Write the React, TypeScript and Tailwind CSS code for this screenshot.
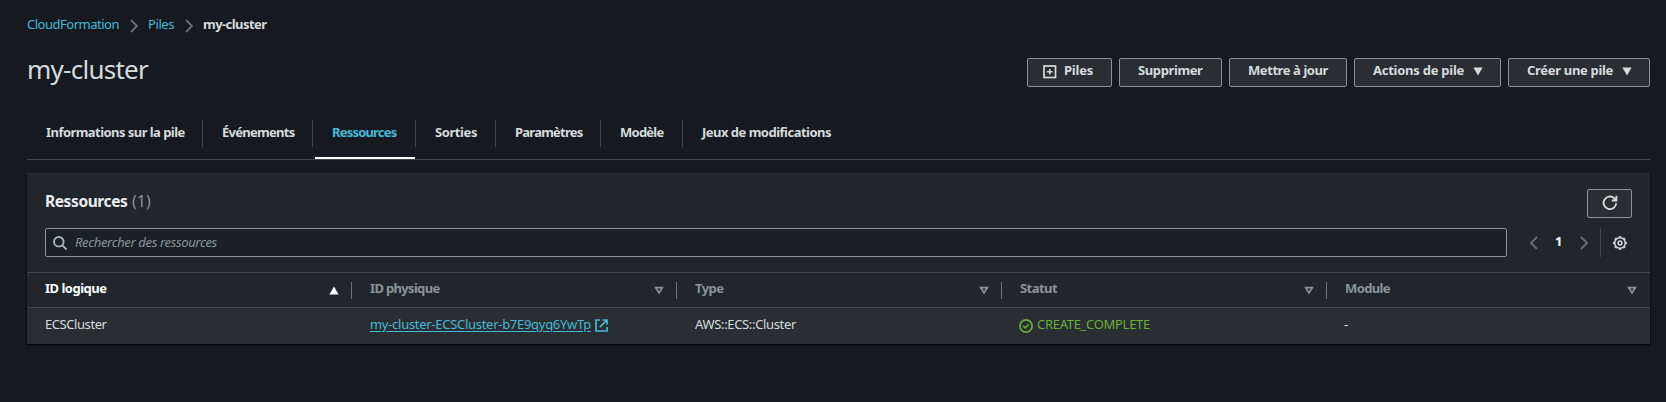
import type { ReactNode } from "react";

function Crumb() {
  return (
    <svg className="mt-[5px] h-[14px] w-2 shrink-0" viewBox="0 0 8 14" fill="none" stroke="#687078" strokeWidth="1.8">
      <path d="M1 1l6 6-6 6" />
    </svg>
  );
}

function StackIcon() {
  return (
    <svg className="mt-[3px] size-[14px] shrink-0" viewBox="0 0 14 14" fill="none" stroke="#d5dbdb">
      <rect x="1" y="1" width="11.5" height="11.5" strokeWidth="1.7" />
      <path d="M6.75 4v5.5M4 6.75h5.5" strokeWidth="1.5" />
    </svg>
  );
}

function Caret() {
  return (
    <svg className="mt-[3px] h-[9px] w-[10px] shrink-0" viewBox="0 0 10 9" fill="#d5dbdb">
      <path d="M.4.5h9.2L5 8.5z" />
    </svg>
  );
}

function Button({ width, children }: { width: string; children: ReactNode }) {
  return (
    <button className={`flex h-[29px] ${width} items-center rounded-[2px] border border-[#879596] bg-[#2a2e33] pb-[5px] pl-[18px] text-left text-[13px] leading-[22px] font-bold whitespace-nowrap text-[#d5dbdb]`}>
      {children}
    </button>
  );
}

const tabs = [
  { label: "Informations sur la pile", width: "w-[176px] pl-[19px]", tracking: "tracking-[-0.55px]" },
  { label: "Événements", width: "w-[110px] pl-[19px]", tracking: "tracking-[-0.72px]" },
  { label: "Ressources", width: "w-[103px] pl-[19px]", tracking: "tracking-[-0.8px]", active: true },
  { label: "Sorties", width: "w-[80px] pl-[19px]", tracking: "tracking-[-0.41px]" },
  { label: "Paramètres", width: "w-[105px] pl-[19px]", tracking: "tracking-[-0.76px]" },
  { label: "Modèle", width: "w-[82px] pl-[19px]", tracking: "tracking-[-0.75px]" },
  { label: "Jeux de modifications", width: "w-[170px] pl-[19px]", tracking: "tracking-[-0.51px]", last: true },
];

const columns = [
  { label: "ID logique", tracking: "tracking-[-0.5px]", sorted: true },
  { label: "ID physique", tracking: "tracking-[-0.67px]" },
  { label: "Type", tracking: "tracking-[-0.53px]" },
  { label: "Statut", tracking: "tracking-[-0.55px]" },
  { label: "Module", tracking: "tracking-[-0.62px]", last: true },
];

const grid = "grid grid-cols-[325px_325px_325px_325px_323px]";

export default function App() {
  return (
    <div className="h-[402px] w-[1666px] overflow-hidden bg-[#16191f] pt-[14px] pr-4 pl-[27px] font-['Noto_Sans','Open_Sans',sans-serif] text-[13px] leading-5 text-[#d5dbdb]">
      <nav className="flex h-5 whitespace-nowrap">
        <a className="w-[103px] tracking-[-0.49px] text-[#44b9d6]">CloudFormation</a>
        <Crumb />
        <a className="ml-[10px] w-[37px] tracking-[-0.4px] text-[#44b9d6]">Piles</a>
        <Crumb />
        <span className="ml-[10px] font-bold tracking-[-0.55px]">my-cluster</span>
      </nav>

      <header className="mt-4 flex h-[37px] items-end justify-between">
        <h1 className="text-[26px] leading-9 tracking-[-0.75px]">my-cluster</h1>
        <div className="flex gap-[7px]">
          <Button width="w-[85px]">
            <span className="-ml-[3px] flex items-center gap-[7px]">
              <StackIcon />
              <span className="tracking-[-0.22px]">Piles</span>
            </span>
          </Button>
          <Button width="w-[103px]"><span className="tracking-[-0.39px]">Supprimer</span></Button>
          <Button width="w-[118px]"><span className="tracking-[-0.42px]">Mettre à jour</span></Button>
          <Button width="w-[147px]">
            <span className="w-[100px] tracking-[-0.25px]">Actions de pile</span>
            <Caret />
          </Button>
          <Button width="w-[142px]">
            <span className="w-[95px] tracking-[-0.31px]">Créer une pile</span>
            <Caret />
          </Button>
        </div>
      </header>

      <div className="mt-[33px] flex h-10 border-b border-[#414750]">
        {tabs.map((tab) => (
          <div key={tab.label} className={`relative h-[27px] ${tab.width} ${tab.last ? "" : "border-r border-[#414750]"} leading-[25px] font-bold whitespace-nowrap ${tab.tracking} ${tab.active ? "text-[#44b9d6]" : ""}`}>
            {tab.label}
            {tab.active && <div className="absolute top-[37px] left-[2px] h-[2px] w-[100px] bg-white" />}
          </div>
        ))}
      </div>

      <main className="mt-[13px] h-[171px] w-[1623px] border-t border-[#2a2e33] bg-[#21252c] shadow-[0_1px_1px_0_rgba(0,0,0,0.6),1px_1px_1px_0_rgba(0,0,0,0.3),-1px_1px_1px_0_rgba(0,0,0,0.3)]">
        <div className="flex h-[54px] justify-between pt-[15px] pr-[18px] pl-[18px]">
          <h2 className="flex text-[15.5px] leading-6 font-bold text-[#eaeded]">
            <span className="w-[87px] tracking-[-0.4px]">Ressources</span>
            <span className="text-[16px] font-normal text-[#879596]">(1)</span>
          </h2>
          <button className="flex h-[29px] w-[45px] items-center rounded-[2px] border border-[#879596] bg-[#2a2e33] pb-px pl-[14px]">
            <svg className="size-4" viewBox="0 0 16 16" fill="none" stroke="#d5dbdb" strokeWidth="1.9">
              <path d="M14.2 8.2A6.3 6.3 0 1 1 12.2 3.2l1.8 1.6" />
              <path d="M14.4 .8v4.7H9.8" />
            </svg>
          </button>
        </div>

        <div className="flex h-[29px] items-center pl-[18px]">
          <div className="flex h-[29px] w-[1462px] items-center rounded-[2px] border border-[#879596] bg-[#1a2029] pl-[7px]">
            <svg className="mr-[8px] size-[14px]" viewBox="0 0 14 14" fill="none" stroke="#aab7b8" strokeWidth="1.9">
              <circle cx="5.8" cy="5.8" r="4.8" />
              <path d="M9.2 9.2l4.3 4.3" />
            </svg>
            <span className="mb-[2px] tracking-[-0.35px] text-[#879596] italic">Rechercher des ressources</span>
          </div>
          <svg className="ml-[23px] h-[14px] w-2" viewBox="0 0 8 14" fill="none" stroke="#687078" strokeWidth="1.8"><path d="M7 1L1 7l6 6" /></svg>
          <span className="mb-[3px] ml-[17px] w-[8px] font-bold text-white">1</span>
          <svg className="ml-[17px] h-[14px] w-2" viewBox="0 0 8 14" fill="none" stroke="#687078" strokeWidth="1.8"><path d="M1 1l6 6-6 6" /></svg>
          <div className="ml-[12px] h-[29px] w-px bg-[#414750]" />
          <svg className="ml-[12px] size-[14px]" viewBox="0 0 14 14" fill="none" stroke="#d5dbdb">
            <circle cx="7" cy="7" r="5.3" strokeWidth="1.5" />
            <circle cx="7" cy="7" r="6.3" strokeWidth="1.3" pathLength="16" strokeDasharray="1 1" strokeDashoffset="0.5" />
            <circle cx="7" cy="7" r="1.9" strokeWidth="1.5" />
          </svg>
        </div>

        <div className={`mt-[15px] h-9 border-y border-[#414750] ${grid}`}>
          {columns.map((col) => (
            <div key={col.label} className="flex h-[34px] items-center justify-between pl-[18px]">
              <span className={`mb-[5px] font-bold ${col.tracking} ${col.sorted ? "text-white" : "text-[#879596]"}`}>{col.label}</span>
              <span className="flex items-center">
                {col.sorted ? (
                  <svg className="mt-[1px] mr-[12px] h-[9px] w-[10px]" viewBox="0 0 10 9" fill="#fff"><path d="M5 .6L9.6 8.4H.4z" /></svg>
                ) : (
                  <svg className={`mt-[1px] h-[9px] w-[10px] ${col.last ? "mr-[13px]" : "mr-[12px]"}`} viewBox="0 0 10 9" fill="none" stroke="#879596" strokeWidth="1.7"><path d="M1.7 1.7h6.6L5 6.9z" /></svg>
                )}
                {!col.last && <span className="h-[17px] w-px bg-[#687078]" />}
              </span>
            </div>
          ))}
        </div>

        <div className={`h-9 bg-[#2a2e33] leading-[32px] whitespace-nowrap ${grid}`}>
          <div className="pl-[18px] tracking-[-0.43px]">ECSCluster</div>
          <div className="flex pl-[18px] text-[#44b9d6]">
            <a className="w-[225px] tracking-[-0.285px] underline underline-offset-2">my-cluster-ECSCluster-b7E9qyq6YwTp</a>
            <svg className="mt-[11px] size-[13px]" viewBox="0 0 13 13" fill="none" stroke="#44b9d6" strokeWidth="1.7">
              <path d="M5 1H1v11h11V8" />
              <path d="M7.5 1H12v4.5M12 1L4.8 8.2" />
            </svg>
          </div>
          <div className="pl-[18px] tracking-[-0.34px]">AWS::ECS::Cluster</div>
          <div className="flex pl-[17px] text-[#6aaf35]">
            <svg className="mt-[11px] mr-[4px] size-[14px]" viewBox="0 0 14 14" fill="none" stroke="#6aaf35">
              <circle cx="7" cy="7" r="6.1" strokeWidth="1.7" />
              <path d="M4 6.8l2.2 2.1 3.7-3.7" strokeWidth="1.6" />
            </svg>
            <span className="tracking-[-0.3px]">CREATE_COMPLETE</span>
          </div>
          <div className="pl-[17px]">-</div>
        </div>
      </main>
    </div>
  );
}
